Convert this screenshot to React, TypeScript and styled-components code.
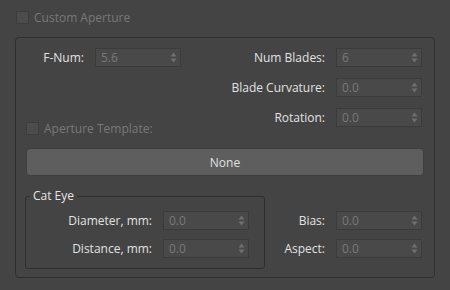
import React from 'react';
import styled, { createGlobalStyle } from 'styled-components';

const GlobalStyle = createGlobalStyle`
    html, body {
        margin: 0;
        padding: 0;
        background: #444444;
    }
    body {
        font-family: "Open Sans", "DejaVu Sans", sans-serif;
        font-size: 12px;
    }
`

const Panel = styled.div`
    width: 450px;
    height: 290px;
    box-sizing: border-box;
    padding: 11px 15px 0 15px;
    background: #444444;
    overflow: hidden;
`

const CheckRow = styled.div<{ $indent?: number, $top?: number }>`
    display: flex;
    align-items: center;
    height: 13px;
    margin-left: ${p => p.$indent || 0}px;
    margin-top: ${p => p.$top || 0}px;
`

const Box = styled.span`
    width: 11px;
    height: 11px;
    background: #4c4c4c;
    border: 1px solid #3c3c3c;
    flex-shrink: 0;
`

const CheckLabel = styled.span`
    color: #787878;
    margin-left: 5px;
    line-height: 13px;
    white-space: nowrap;
`

const Group = styled.div`
    margin-top: 13px;
    width: 420px;
    height: 241px;
    box-sizing: border-box;
    border: 1px solid #2e2e2e;
    border-radius: 4px;
    padding: 10px 10px 0 10px;
`

const Upper = styled.div`
    display: flex;
    justify-content: space-between;
    align-items: flex-start;
`

const LeftCol = styled.div`
    display: flex;
    flex-direction: column;
`

const RightCol = styled.div`
    display: flex;
    flex-direction: column;
    gap: 11px;
    padding-right: 2px;
`

const Row = styled.div`
    display: flex;
    align-items: center;
    gap: 11px;
    height: 19px;
`

const Label = styled.span<{ $w: number }>`
    width: ${p => p.$w}px;
    text-align: right;
    color: #e2e2e2;
    white-space: nowrap;
`

const SpinBox = styled.div`
    width: 86px;
    height: 19px;
    box-sizing: border-box;
    display: flex;
    align-items: center;
    justify-content: space-between;
    background: #494949;
    border: 1px solid #3b3b3b;
    padding: 0 3px 0 5px;
    color: #787878;
`

const Arrows = styled.svg`
    width: 7px;
    height: 11px;
`

const NoneButton = styled.div`
    margin-top: 13px;
    height: 28px;
    box-sizing: border-box;
    display: flex;
    align-items: center;
    justify-content: center;
    background: #5e5e5e;
    border: 1px solid #3e3e3e;
    border-radius: 4px;
    color: #e0e0e0;
`

const Lower = styled.div`
    margin-top: 20px;
    display: flex;
    justify-content: space-between;
    align-items: flex-start;
`

const CatEye = styled.div`
    position: relative;
    width: 240px;
    height: 73px;
    box-sizing: border-box;
    border: 1px solid #2e2e2e;
    border-radius: 3px;
    margin-left: -1px;
    padding: 14px 15px 0 0;
    display: flex;
    flex-direction: column;
    align-items: flex-end;
    gap: 9px;
`

const Legend = styled.span`
    position: absolute;
    top: -9px;
    left: 4px;
    padding: 0 3px;
    background: #444444;
    color: #e4e4e4;
    line-height: 16px;
`

const LowerRight = styled.div`
    margin-top: 15px;
    display: flex;
    flex-direction: column;
    gap: 9px;
    padding-right: 2px;
`

const Spinner = ({ value }: { value: string }) => (
    <SpinBox>
        <span>{value}</span>
        <Arrows viewBox="0 0 7 11">
            <path d="M3.5 0.5 L6.5 4.5 L0.5 4.5 Z" fill="#6f6f6f" />
            <path d="M3.5 10.5 L6.5 6.5 L0.5 6.5 Z" fill="#6f6f6f" />
        </Arrows>
    </SpinBox>
)

const Field = ({ label, value, w }: { label: string, value: string, w: number }) => (
    <Row>
        <Label $w={w}>{label}</Label>
        <Spinner value={value} />
    </Row>
)

const App = () => {
    return (
        <>
            <GlobalStyle />
            <Panel>
                <CheckRow $indent={1}>
                    <Box />
                    <CheckLabel>Custom Aperture</CheckLabel>
                </CheckRow>
                <Group>
                    <Upper>
                        <LeftCol>
                            <Field label="F-Num:" value="5.6" w={58} />
                            <CheckRow $top={55}>
                                <Box />
                                <CheckLabel>Aperture Template:</CheckLabel>
                            </CheckRow>
                        </LeftCol>
                        <RightCol>
                            <Field label="Num Blades:" value="6" w={110} />
                            <Field label="Blade Curvature:" value="0.0" w={110} />
                            <Field label="Rotation:" value="0.0" w={110} />
                        </RightCol>
                    </Upper>
                    <NoneButton>None</NoneButton>
                    <Lower>
                        <CatEye>
                            <Legend>Cat Eye</Legend>
                            <Field label="Diameter, mm:" value="0.0" w={110} />
                            <Field label="Distance, mm:" value="0.0" w={110} />
                        </CatEye>
                        <LowerRight>
                            <Field label="Bias:" value="0.0" w={60} />
                            <Field label="Aspect:" value="0.0" w={60} />
                        </LowerRight>
                    </Lower>
                </Group>
            </Panel>
        </>
    )
}

export default App
